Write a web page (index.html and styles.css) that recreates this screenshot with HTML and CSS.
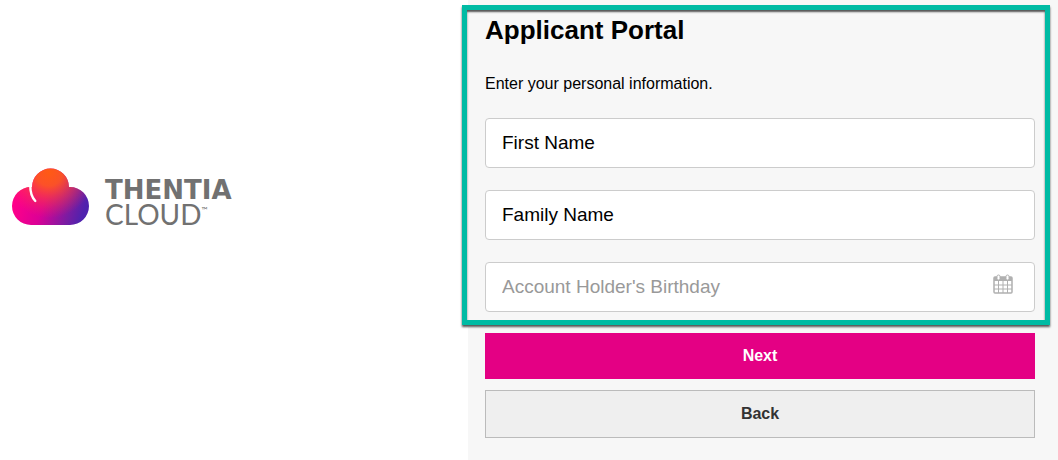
FILE: index.html
```
<!DOCTYPE html>
<html lang="en">
<head>
<meta charset="utf-8"/>
<meta content="width=device-width, initial-scale=1.0" name="viewport"/>
<title>Applicant Portal</title>
<link rel="stylesheet" href="styles.css">
</head>
<body>
<div class="page">
  <header class="brand">
    <svg class="cloud" width="77" height="57" viewBox="0 0 77 57" aria-hidden="true">
      <defs>
        <linearGradient id="base" gradientUnits="userSpaceOnUse" x1="6" y1="26" x2="70" y2="48">
          <stop offset="0" stop-color="#ff008a"/>
          <stop offset="0.4" stop-color="#dc0096"/>
          <stop offset="0.8" stop-color="#7a1ca2"/>
          <stop offset="1" stop-color="#4f22ae"/>
        </linearGradient>
        <radialGradient id="glow" gradientUnits="userSpaceOnUse" cx="37" cy="4" r="46">
          <stop offset="0" stop-color="#ff5a14"/>
          <stop offset="0.3" stop-color="#ff5a1c" stop-opacity="0.9"/>
          <stop offset="1" stop-color="#ff2a50" stop-opacity="0"/>
        </radialGradient>
      </defs>
      <path fill="url(#base)" d="M19 57A19 19 0 0 1 19 19H20A18.500 18.500 0 0 1 57 19H58A19 19 0 0 1 58 57Z"/>
      <path fill="url(#glow)" d="M19 57A19 19 0 0 1 19 19H20A18.500 18.500 0 0 1 57 19H58A19 19 0 0 1 58 57Z"/>
      <path d="M18.300 17.500C18.200 24 20 29.500 23.300 33" fill="none" stroke="#fff" stroke-width="2.400" stroke-linecap="round"/>
    </svg>
    <div class="brand-name">
      <span class="brand-top">THENTIA</span>
      <span class="brand-bottom">CLOUD<span class="tm">™</span></span>
    </div>
  </header>
  <main class="panel">
    <form>
      <section class="details">
        <h1>Applicant Portal</h1>
        <p>Enter your personal information.</p>
        <div class="fields">
          <input class="field" type="text" value="First Name" aria-label="First Name">
          <input class="field" type="text" value="Family Name" aria-label="Family Name">
          <div class="field date-field">
            <input type="text" placeholder="Account Holder's Birthday" aria-label="Account Holder's Birthday">
            <button type="button" class="calendar" aria-label="Open calendar">
              <svg width="20" height="20" viewBox="0 0 20 20">
                <rect x="1" y="3" width="18" height="16" rx="1" fill="#fff" stroke="#b0b0b0" stroke-width="1.500"/>
                <path d="M1 3H19V7H1Z" fill="#b0b0b0"/>
                <path d="M5.500 7V19M10 7V19M14.500 7V19M1 11H19M1 15H19" stroke="#b0b0b0"/>
                <rect x="4" y="1" width="3" height="5" rx="1.500" fill="#fff" stroke="#b0b0b0"/>
                <rect x="13" y="1" width="3" height="5" rx="1.500" fill="#fff" stroke="#b0b0b0"/>
              </svg>
            </button>
          </div>
        </div>
      </section>
      <div class="actions">
        <button type="submit" class="btn btn-next">Next</button>
        <button type="button" class="btn btn-back">Back</button>
      </div>
    </form>
  </main>
</div>
</body>
</html>
```

FILE: styles.css
```
* { box-sizing: border-box; }
body { margin: 0; background-color: #fff; color: #000; font-family: "Liberation Sans", Arial, sans-serif; }
.page {
  display: grid;
  grid-template-columns: 468px 1fr;
  min-height: 100vh;
}
.brand {
  display: flex;
  align-items: flex-start;
  gap: 16px;
  padding: 168px 12px 0;
}
.cloud { flex: none; }
.brand-name {
  display: flex;
  flex-direction: column;
  padding-top: 10px;
  color: #717171;
}
.brand-top { font: bold 26px/24px "DejaVu Sans", sans-serif; }
.brand-bottom { font: 400 28px/24px Lato, sans-serif; }
.tm { font-size: 8px; vertical-align: 12px; line-height: 1px; }
.panel {
  background-color: #f7f7f7;
  padding: 5px 23px 22px 17px;
}
.details { position: relative; padding: 10px 0 13px; }
/* highlight frame around the personal details */
.details::after {
  content: "";
  position: absolute;
  inset: 0 -15px 0 -23px;
  border: 5px solid #00bba4;
  box-shadow: 0 2px 2px #555, inset 0 2px 2px #555;
  pointer-events: none;
}
h1 { margin: 0; font-size: 26px; line-height: 30px; }
p { margin: 29px 0 0; font-size: 16px; line-height: 20px; }
.fields {
  display: flex;
  flex-direction: column;
  gap: 22px;
  margin-top: 24px;
}
.field {
  width: 100%;
  height: 50px;
  padding: 0 16px;
  border: 1px solid #ccc;
  border-radius: 4px;
  background-color: #fff;
  color: #000;
  font: 19px "Liberation Sans", Arial, sans-serif;
}
.date-field { display: flex; align-items: center; padding-right: 21px; }
.date-field input {
  flex: 1;
  min-width: 0;
  padding: 0;
  border: none;
  background: none;
  font: inherit;
}
.date-field input::placeholder { color: #999; opacity: 1; }
.calendar {
  display: flex;
  padding: 0 0 6px;
  border: none;
  background: none;
  cursor: pointer;
}
.actions {
  display: flex;
  flex-direction: column;
  gap: 11px;
  margin-top: 8px;
}
.btn {
  height: 46px;
  border: none;
  font: bold 16px "Liberation Sans", Arial, sans-serif;
  cursor: pointer;
}
.btn-next { background-color: #e40084; color: #fff; }
.btn-back { height: 48px; border: 1px solid #bbb; background-color: #efefef; color: #333; }
```
